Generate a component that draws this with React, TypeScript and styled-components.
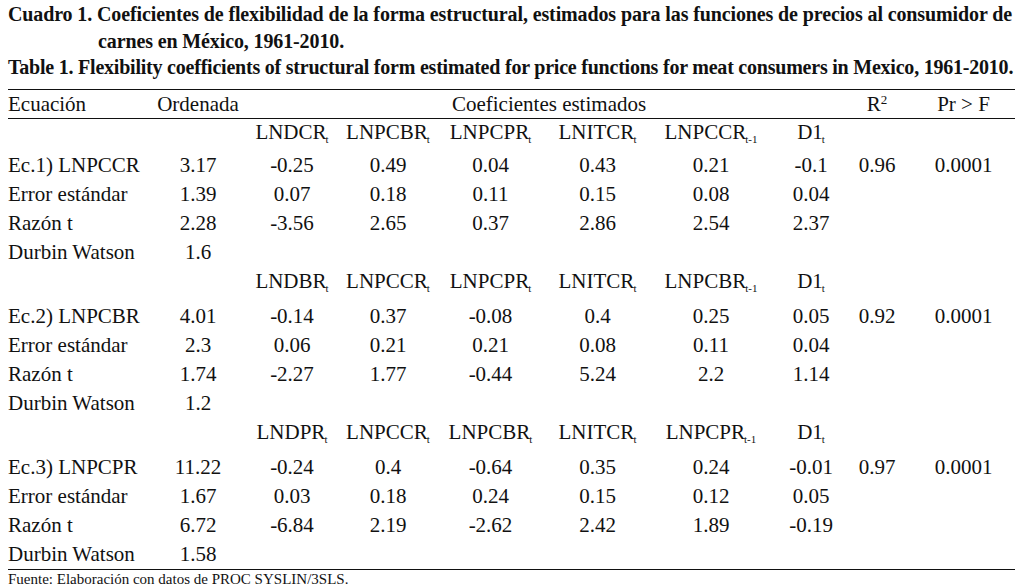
import React from "react"
import styled, { createGlobalStyle } from "styled-components"

const GlobalStyle = createGlobalStyle`
  html, body {
    margin: 0;
    padding: 0;
    background: #ffffff;
  }
  body {
    font-family: "Liberation Serif", "Times New Roman", serif;
    color: #111;
  }
`

type Block = {
  vars: string[]
  lag: number
  compact?: boolean
  rows: string[][]
}

const blocks: Block[] = [
  {
    vars: ["LNDCR", "LNPCBR", "LNPCPR", "LNITCR", "LNPCCR", "D1"],
    lag: 4,
    compact: true,
    rows: [
      ["Ec.1) LNPCCR", "3.17", "-0.25", "0.49", "0.04", "0.43", "0.21", "-0.1", "0.96", "0.0001"],
      ["Error estándar", "1.39", "0.07", "0.18", "0.11", "0.15", "0.08", "0.04"],
      ["Razón t", "2.28", "-3.56", "2.65", "0.37", "2.86", "2.54", "2.37"],
      ["Durbin Watson", "1.6"],
    ],
  },
  {
    vars: ["LNDBR", "LNPCCR", "LNPCPR", "LNITCR", "LNPCBR", "D1"],
    lag: 4,
    rows: [
      ["Ec.2) LNPCBR", "4.01", "-0.14", "0.37", "-0.08", "0.4", "0.25", "0.05", "0.92", "0.0001"],
      ["Error estándar", "2.3", "0.06", "0.21", "0.21", "0.08", "0.11", "0.04"],
      ["Razón t", "1.74", "-2.27", "1.77", "-0.44", "5.24", "2.2", "1.14"],
      ["Durbin Watson", "1.2"],
    ],
  },
  {
    vars: ["LNDPR", "LNPCCR", "LNPCBR", "LNITCR", "LNPCPR", "D1"],
    lag: 4,
    rows: [
      ["Ec.3) LNPCPR", "11.22", "-0.24", "0.4", "-0.64", "0.35", "0.24", "-0.01", "0.97", "0.0001"],
      ["Error estándar", "1.67", "0.03", "0.18", "0.24", "0.15", "0.12", "0.05"],
      ["Razón t", "6.72", "-6.84", "2.19", "-2.62", "2.42", "1.89", "-0.19"],
      ["Durbin Watson", "1.58"],
    ],
  },
]

const colWidths = [142, 96, 92, 100, 105, 109, 118, 82, 50, 113]

const App: React.FC = () => {
  return (
    <>
      <GlobalStyle />
      <Page>
        <Caption>
          <CaptionLine $hang>
            Cuadro 1. Coeficientes de flexibilidad de la forma estructural, estimados para las funciones de precios al consumidor de carnes en México, 1961-2010.
          </CaptionLine>
          <CaptionLine $tight>
            Table 1. Flexibility coefficients of structural form estimated for price functions for meat consumers in Mexico, 1961-2010.
          </CaptionLine>
        </Caption>

        <Table>
          <colgroup>
            {colWidths.map((w, i) => (
              <col key={i} style={{ width: w }} />
            ))}
          </colgroup>
          <thead>
            <HeadRow>
              <LabelCell>Ecuación</LabelCell>
              <Cell>Ordenada</Cell>
              <Cell colSpan={6}>Coeficientes estimados</Cell>
              <Cell>
                R<Sup>2</Sup>
              </Cell>
              <ProbCell>Pr &gt; F</ProbCell>
            </HeadRow>
          </thead>
          {blocks.map((block, b) => (
            <tbody key={b}>
              <VarRow $compact={block.compact}>
                <LabelCell />
                <Cell />
                {block.vars.map((v, i) => (
                  <Cell key={v + i}>
                    {v}
                    <Sub>{i === block.lag ? "t-1" : "t"}</Sub>
                  </Cell>
                ))}
                <Cell />
                <ProbCell />
              </VarRow>
              {block.rows.map((row, r) => (
                <DataRow key={r} $first={r === 0} $last={b === blocks.length - 1 && r === block.rows.length - 1}>
                  {Array.from({ length: 10 }).map((_, c) =>
                    c === 0 ? (
                      <LabelCell key={c}>{row[0]}</LabelCell>
                    ) : c === 9 ? (
                      <ProbCell key={c}>{row[c] ?? ""}</ProbCell>
                    ) : (
                      <Cell key={c}>{row[c] ?? ""}</Cell>
                    )
                  )}
                </DataRow>
              ))}
            </tbody>
          ))}
        </Table>

        <Source>Fuente: Elaboración con datos de PROC SYSLIN/3SLS.</Source>
      </Page>
    </>
  )
}

const Page = styled.div`
  width: 1030px;
  height: 588px;
  box-sizing: border-box;
  padding: 1px 15px 0 8px;
  background: #fff;
  overflow: hidden;
`

const Caption = styled.div`
  font-weight: bold;
  font-size: 20px;
  line-height: 26.5px;
  color: #111;
`

const CaptionLine = styled.div<{ $hang?: boolean; $tight?: boolean }>`
  white-space: ${(p) => (p.$tight ? "nowrap" : "normal")};
  letter-spacing: ${(p) => (p.$tight ? "-0.22px" : "-0.12px")};
  padding-left: ${(p) => (p.$hang ? "90px" : "0")};
  text-indent: ${(p) => (p.$hang ? "-90px" : "0")};
`

const Table = styled.table`
  margin-top: 8px;
  width: 1007px;
  table-layout: fixed;
  border-collapse: collapse;
  font-size: 21px;
  color: #111;
`

const HeadRow = styled.tr`
  height: 29px;
  border-top: 1px solid #111;
  border-bottom: 1px solid #111;
  & > td {
    line-height: 28px;
    padding: 0;
  }
`

const VarRow = styled.tr<{ $compact?: boolean }>`
  height: ${(p) => (p.$compact ? "26px" : "29px")};
  & > td {
    padding: 0;
    line-height: ${(p) => (p.$compact ? "26px" : "29px")};
    vertical-align: middle;
  }
`

const DataRow = styled.tr<{ $first?: boolean; $last?: boolean }>`
  height: ${(p) => (p.$first ? "35px" : "29px")};
  border-bottom: ${(p) => (p.$last ? "1px solid #111" : "none")};
  & > td {
    padding: ${(p) => (p.$first ? "6px 0 0" : "0")};
    line-height: 29px;
    vertical-align: top;
  }
`

const Cell = styled.td`
  text-align: center;
  white-space: nowrap;
`

const LabelCell = styled.td`
  text-align: left;
  white-space: nowrap;
`

const ProbCell = styled.td`
  text-align: center;
  white-space: nowrap;
  && {
    padding-left: 10px;
  }
`

const Sub = styled.sub`
  font-size: 11px;
  line-height: 0;
  vertical-align: -4px;
  margin-left: -1px;
`

const Sup = styled.sup`
  font-size: 13px;
  line-height: 0;
  vertical-align: 7px;
`

const Source = styled.div`
  font-size: 15px;
  line-height: 18px;
  color: #111;
`

export default App
